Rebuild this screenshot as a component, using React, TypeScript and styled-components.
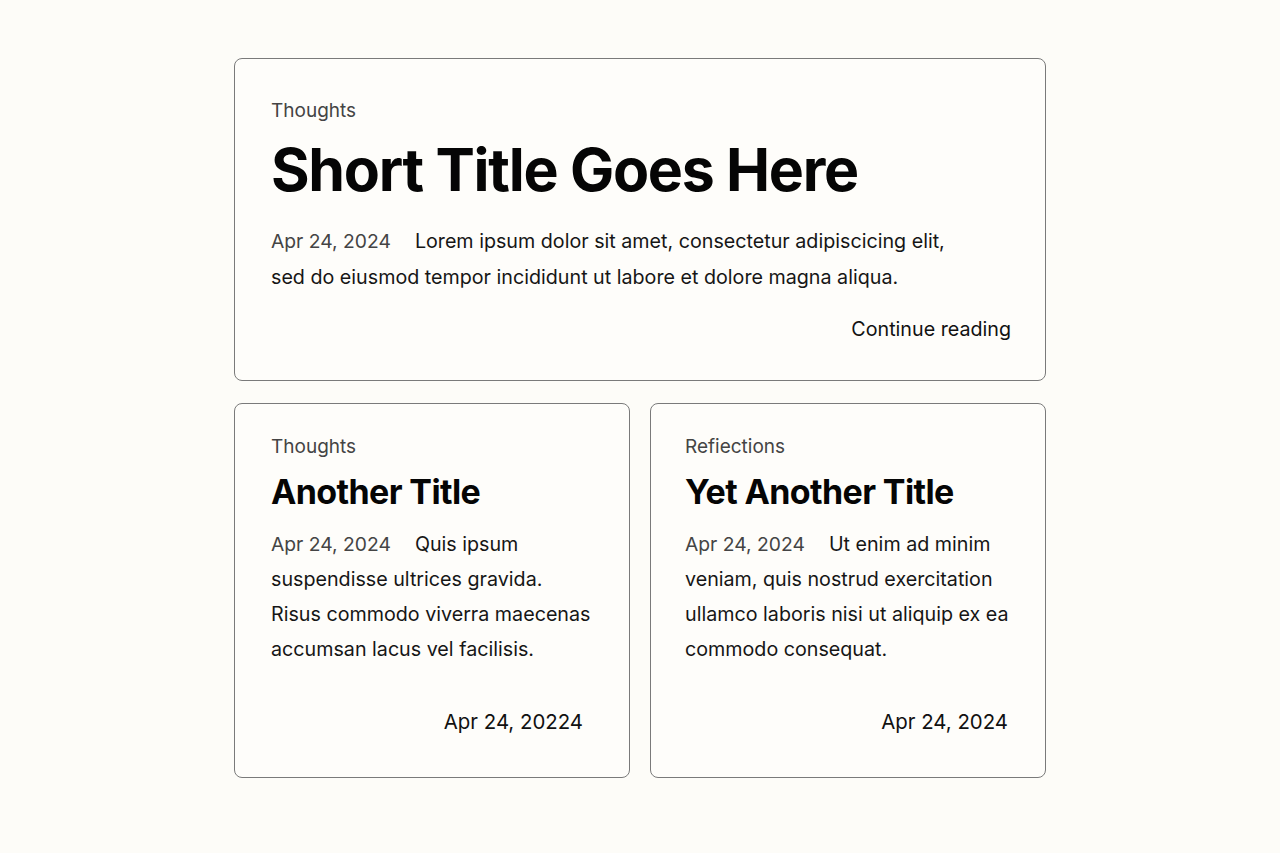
import React from "react";
import styled, { createGlobalStyle } from "styled-components";

const Global = createGlobalStyle`
  html, body { margin: 0; padding: 0; background: #fdfcf8; }
  body { font-family: Inter, "Noto Sans", sans-serif; color: #111; -webkit-font-smoothing: antialiased; }
`;

const Page = styled.main`
  width: 812px;
  margin: 58px auto 0;
  display: flex;
  flex-direction: column;
  gap: 22px;
`;

const Card = styled.article<{ $large?: boolean; $left?: number; $right?: number }>`
  box-sizing: border-box;
  border: 1px solid #7a7a7a;
  border-radius: 8px;
  background: #fefdfa;
  display: flex;
  flex-direction: column;
  padding: ${(p) =>
    p.$large
      ? "40px 34px 39px 36px"
      : `31px ${p.$right ?? 30}px 42px ${p.$left ?? 36}px`};
`;

const Row = styled.div`
  display: grid;
  grid-template-columns: 396px 396px;
  justify-content: space-between;
`;

const Category = styled.div`
  font-size: 19px;
  line-height: 24px;
  color: #444;
  font-weight: 400;
`;

const Title = styled.h2<{ $large?: boolean }>`
  margin: ${(p) => (p.$large ? "14px 0 0" : "12px 0 0")};
  font-size: ${(p) => (p.$large ? "59px" : "34px")};
  line-height: ${(p) => (p.$large ? "66px" : "42px")};
  font-weight: 700;
  letter-spacing: ${(p) => (p.$large ? "-0.022em" : "-0.018em")};
  color: #050505;
`;

const Body = styled.p<{ $large?: boolean }>`
  margin: ${(p) => (p.$large ? "20px 0 0" : "14px 0 0")};
  font-size: 19.7px;
  line-height: ${(p) => (p.$large ? "36px" : "35px")};
  color: #161616;
  max-width: ${(p) => (p.$large ? "690px" : "none")};
`;

const DateLabel = styled.span`
  color: #444;
  font-size: 19.3px;
  margin-right: 24px;
`;

const Footer = styled.div<{ $inset?: number }>`
  margin-top: auto;
  padding-right: ${(p) => p.$inset ?? 0}px;
  text-align: right;
  font-size: 20.4px;
  line-height: 26px;
  color: #111;
`;

const ContinueLink = styled.a`
  margin-top: 22px;
  align-self: flex-end;
  font-size: 19.7px;
  line-height: 24px;
  color: #111;
  text-decoration: none;
`;

const SmallFooterGap = styled.div`
  height: 42px;
  flex: none;
`;

export default function App() {
  return (
    <>
      <Global />
      <Page>
        <Card $large>
          <Category>Thoughts</Category>
          <Title $large>Short Title Goes Here</Title>
          <Body $large>
            <DateLabel>Apr 24, 2024</DateLabel>
            Lorem ipsum dolor sit amet, consectetur adipiscicing elit, sed do eiusmod tempor incididunt ut labore et dolore magna aliqua.
          </Body>
          <ContinueLink href="#">Continue reading</ContinueLink>
        </Card>
        <Row>
          <Card $right={36}>
            <Category>Thoughts</Category>
            <Title>Another Title</Title>
            <Body>
              <DateLabel>Apr 24, 2024</DateLabel>
              Quis ipsum suspendisse ultrices gravida. Risus commodo viverra maecenas accumsan lacus vel facilisis.
            </Body>
            <SmallFooterGap />
            <Footer $inset={10}>Apr 24, 20224</Footer>
          </Card>
          <Card $left={34}>
            <Category>Refiections</Category>
            <Title>Yet Another Title</Title>
            <Body>
              <DateLabel>Apr 24, 2024</DateLabel>
              Ut enim ad minim veniam, quis nostrud exercitation ullamco laboris nisi ut aliquip ex ea commodo consequat.
            </Body>
            <SmallFooterGap />
            <Footer $inset={7}>Apr 24, 2024</Footer>
          </Card>
        </Row>
      </Page>
    </>
  );
}
